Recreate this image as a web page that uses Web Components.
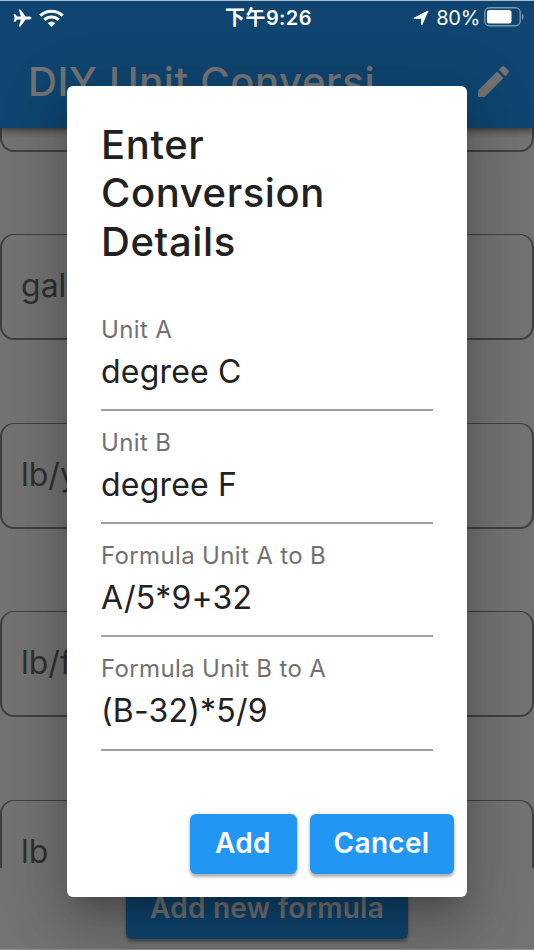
<!DOCTYPE html>
<html lang="en">
<head>
<meta charset="utf-8">
<title>DIY Unit Conversion</title>
<style>
    html, body {
        margin: 0;
        height: 100%;
        overflow: hidden;
    }
    body {
        font-family: Inter, "Noto Sans CJK TC", sans-serif;
    }
</style>
</head>
<body>
<unit-app>
    <app-bar slot="bar">DIY Unit Conversi</app-bar>
    <unit-card></unit-card>
    <unit-card>gal</unit-card>
    <unit-card>lb/yd</unit-card>
    <unit-card>lb/ft</unit-card>
    <unit-card>lb</unit-card>
    <raised-button slot="footer">Add new formula</raised-button>
    <status-bar slot="status" time="下午9:26" battery="80%"></status-bar>
    <form-dialog slot="dialog">
        <span slot="title">Enter Conversion Details</span>
        <text-field label="Unit A">degree C</text-field>
        <text-field label="Unit B">degree F</text-field>
        <text-field label="Formula Unit A to B">A/5*9+32</text-field>
        <text-field label="Formula Unit B to A">(B-32)*5/9</text-field>
        <raised-button slot="actions" style="--width: 107px">Add</raised-button>
        <raised-button slot="actions" style="--width: 144px">Cancel</raised-button>
    </form-dialog>
</unit-app>

<script>
class BaseElement extends HTMLElement {
    constructor() {
        super()
        this.attachShadow({ mode: "open" })
    }
    connectedCallback() {
        const template = document.createElement("template")
        template.innerHTML = this.getStyles() + this.getTemplate()
        this.shadowRoot.replaceChildren(template.content.cloneNode(true))
    }
}

class UnitApp extends BaseElement {
    getTemplate() {
        return `
        <div class="page">
            <slot name="bar"></slot>
            <div class="list"><slot></slot></div>
            <footer><slot name="footer"></slot></footer>
        </div>
        <div class="scrim"></div>
        <div class="status"><slot name="status"></slot></div>
        <div class="overlay"><slot name="dialog"></slot></div>
        `
    }
    getStyles() {
        return `
        <style>
            :host {
                display: block;
                position: relative;
                height: 100vh;
                overflow: hidden;
            }
            .page {
                display: flex;
                flex-direction: column;
                height: 100%;
                background: #fafafa;
                isolation: isolate;
            }
            .list {
                display: flex;
                flex-direction: column;
                justify-content: flex-end;
                gap: 82.5px;
                height: 740.5px;
                flex: none;
                overflow: hidden;
                box-sizing: border-box;
            }
            .list ::slotted(:last-of-type) {
                margin-bottom: -37.5px;
            }
            footer {
                display: flex;
                justify-content: center;
                padding-top: 10.5px;
            }
            footer ::slotted(*) {
                --width: 282px;
                --spacing: .25px;
            }
            .scrim, .overlay, .status {
                position: absolute;
                inset: 0;
            }
            .scrim {
                background: rgba(0, 0, 0, .54);
                border-top: 1px solid #a9bccb;
                border-bottom: 1px solid #8d8d8d;
                box-sizing: border-box;
            }
            .status {
                bottom: auto;
            }
            .overlay {
                display: flex;
                justify-content: center;
                align-items: flex-start;
                padding-top: 85.5px;
            }
        </style>
        `
    }
}

class AppBar extends BaseElement {
    getTemplate() {
        return `
        <h1><slot></slot></h1>
        <svg viewBox="0 0 24 24" fill="currentColor"><path d="M3 17.250V21h3.750L17.810 9.940l-3.750-3.750L3 17.250zM20.710 7.040a1 1 0 0 0 0-1.410l-2.340-2.340a1 1 0 0 0-1.410 0l-1.830 1.830 3.750 3.750 1.830-1.830z"/></svg>
        `
    }
    getStyles() {
        return `
        <style>
            :host {
                display: flex;
                justify-content: space-between;
                align-items: center;
                flex: none;
                box-sizing: border-box;
                height: 127.5px;
                padding: 35px 20px 0 28px;
                background: #2196f3;
                color: #fafafa;
                box-shadow: 0 3px 7px rgba(0, 0, 0, .5);
                position: relative;
                z-index: 1;
            }
            h1 {
                margin: 2px 0 0;
                font-size: 40px;
                font-weight: 500;
                line-height: 48px;
                letter-spacing: .65px;
                white-space: nowrap;
            }
            svg {
                width: 41px;
                height: 41px;
            }
        </style>
        `
    }
}

class StatusBar extends BaseElement {
    getTemplate() {
        return `
        <div class="left">
            <svg width="19" height="18" viewBox="0 0 19 18" fill="currentColor"><path d="M18.500 9c0-.8-1-1.500-2.600-1.500h-3.400L8 1.100C7.700.7 7.300.5 6.800.5h-1l2.100 7H4.200L2.300 5.300H.6l.9 3.700-.9 3.700h1.700l1.900-2.200h3.700l-2.100 7h1c.5 0 .9-.2 1.200-.6l4.500-6.400h3.400c1.600 0 2.600-.7 2.600-1.500z"/></svg>
            <svg width="25" height="18" viewBox="0 0 25 18"><g fill="none" stroke="currentColor" stroke-width="3.100"><path d="M1.300 6.700a16.200 16.200 0 0 1 22.400 0"/><path d="M5.300 10.900a10.500 10.500 0 0 1 14.400 0"/></g><path fill="currentColor" d="M8.600 14.100a5.900 5.900 0 0 1 7.800 0L12.500 18z"/></svg>
        </div>
        <time>${this.getAttribute("time")}</time>
        <div class="right">
            <svg width="16" height="16" viewBox="0 0 16 16" fill="currentColor" stroke="currentColor" stroke-width="1" stroke-linejoin="round"><path d="M15.100 1 8.700 15V8.300H.9z"/></svg>
            <span>${this.getAttribute("battery")}</span>
            <svg class="battery" width="40" height="20" viewBox="0 0 40 20"><rect x=".8" y=".8" width="35.400" height="17.900" rx="4.700" fill="none" stroke="currentColor" stroke-opacity=".45" stroke-width="1.400"/><rect x="3" y="3" width="24.500" height="13.500" rx="2.500" fill="currentColor"/><path d="M38 6.500c2.100 1.300 2.100 5.200 0 6.500z" fill="currentColor" opacity=".45"/></svg>
        </div>
        `
    }
    getStyles() {
        return `
        <style>
            :host {
                display: grid;
                grid-template-columns: 1fr auto 1fr;
                align-items: center;
                height: 36px;
                padding: 0 10px 0 13px;
                color: #fff;
                font-size: 20px;
            }
            .left, .right {
                display: flex;
                align-items: center;
            }
            .left {
                gap: 7px;
            }
            .right {
                justify-content: flex-end;
            }
            .right span {
                margin: 0 4px 0 7px;
                letter-spacing: -.3px;
            }
            .battery {
                margin-top: -2px;
            }
            time {
                font-weight: 600;
                letter-spacing: .4px;
                line-height: 24px;
            }
        </style>
        `
    }
}

class UnitCard extends BaseElement {
    getTemplate() {
        return `<slot></slot>`
    }
    getStyles() {
        return `
        <style>
            :host {
                display: flex;
                align-items: center;
                flex: none;
                box-sizing: border-box;
                height: 106px;
                padding: 0 19px 2px;
                border: solid #8c8c8c;
                border-width: 1px 2px 2px;
                border-radius: 14px;
                color: #6b6b6b;
                font-size: 32px;
            }
        </style>
        `
    }
}

class FormDialog extends BaseElement {
    getTemplate() {
        return `
        <h2><slot name="title"></slot></h2>
        <div class="fields"><slot></slot></div>
        <div class="actions"><slot name="actions"></slot></div>
        `
    }
    getStyles() {
        return `
        <style>
            :host {
                display: flex;
                flex-direction: column;
                box-sizing: border-box;
                width: 400px;
                height: 811.5px;
                padding: 35.5px 13.5px 23px 34px;
                border-radius: 6px;
                background: #fff;
                color: #212121;
                box-shadow: 0 16px 22px -10px rgba(0, 0, 0, .2), 0 34px 54px 4px rgba(0, 0, 0, .14), 0 13px 65px 11px rgba(0, 0, 0, .12);
            }
            h2 {
                width: 260px;
                margin: 0 0 32px;
                font-size: 40px;
                font-weight: 500;
                line-height: 48.300px;
                letter-spacing: .6px;
            }
            .fields {
                margin-right: 20.5px;
            }
            .actions {
                display: flex;
                justify-content: flex-end;
                gap: 13px;
                margin-top: auto;
            }
        </style>
        `
    }
}

class TextField extends BaseElement {
    getTemplate() {
        return `
        <label>${this.getAttribute("label")}</label>
        <div class="value"><slot></slot></div>
        `
    }
    getStyles() {
        return `
        <style>
            :host {
                display: flex;
                flex-direction: column;
                box-sizing: border-box;
                height: 113.200px;
                padding-top: 17px;
                border-bottom: 2px solid #a0a0a0;
            }
            label {
                color: #717171;
                font-size: 24px;
                line-height: 30px;
                letter-spacing: .35px;
            }
            .value {
                margin-top: 7px;
                font-size: 32px;
                line-height: 40px;
                letter-spacing: .2px;
            }
        </style>
        `
    }
}

class RaisedButton extends BaseElement {
    getTemplate() {
        return `<button><slot></slot></button>`
    }
    getStyles() {
        return `
        <style>
            :host {
                display: block;
            }
            button {
                display: block;
                width: var(--width);
                height: 60px;
                padding: 0 0 2px;
                border: 0;
                border-radius: 6px;
                background: #2196f3;
                color: #fff;
                font: 600 28px/34px Inter, sans-serif;
                letter-spacing: var(--spacing, .3px);
                white-space: nowrap;
                box-shadow: 0 3px 3px rgba(0, 0, 0, .25), 0 1px 5px rgba(0, 0, 0, .15);
            }
        </style>
        `
    }
}

customElements.define("unit-app", UnitApp)
customElements.define("app-bar", AppBar)
customElements.define("status-bar", StatusBar)
customElements.define("unit-card", UnitCard)
customElements.define("form-dialog", FormDialog)
customElements.define("text-field", TextField)
customElements.define("raised-button", RaisedButton)
</script>
</body>
</html>
